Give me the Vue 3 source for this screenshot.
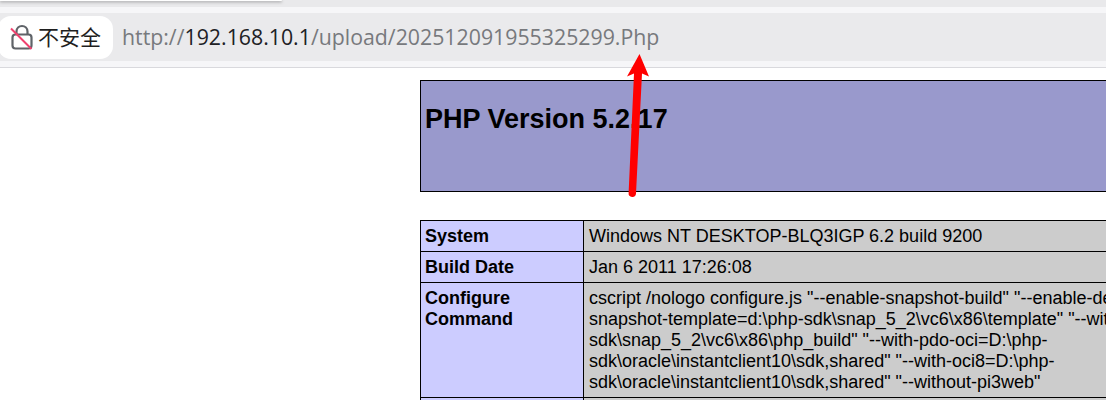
<script setup>
const rows = [
  { label: ['System'], value: ['Windows NT DESKTOP-BLQ3IGP 6.2 build 9200'] },
  { label: ['Build Date'], value: ['Jan 6 2011 17:26:08'] },
  {
    label: ['Configure', 'Command'],
    value: [
      'cscript /nologo configure.js "--enable-snapshot-build" "--enable-debug-pack" "--with-',
      'snapshot-template=d:\\php-sdk\\snap_5_2\\vc6\\x86\\template" "--with-php-build=d:\\php-',
      'sdk\\snap_5_2\\vc6\\x86\\php_build" "--with-pdo-oci=D:\\php-',
      'sdk\\oracle\\instantclient10\\sdk,shared" "--with-oci8=D:\\php-',
      'sdk\\oracle\\instantclient10\\sdk,shared" "--without-pi3web"',
    ],
  },
  { label: [''], value: [''] },
]
</script>

<template>
  <div class="screen">
    <header class="browser">
      <div class="top-strip"><div class="popup"></div></div>
      <div class="omnibox">
        <div class="chip">
          <svg class="lock" width="24" height="28" viewBox="0 0 24 28" fill="none">
            <path d="M6.5 11.5V8.6C6.5 5.2 9 3 12 3s5.5 2.2 5.5 5.6V11.5" stroke="#5f6368" stroke-width="2.2"/>
            <rect x="2.5" y="11.5" width="19" height="14" rx="3" stroke="#5f6368" stroke-width="2.2"/>
            <path d="M1 5.5 21.5 26" stroke="#f0416f" stroke-width="2"/>
          </svg>
          <span class="chip-text">不安全</span>
        </div>
        <div class="url"><span class="dim">http://</span><span class="host">192.168.10.1</span><span class="dim">/upload/202512091955325299.Php</span></div>
      </div>
    </header>
    <main class="page">
      <div class="banner"><h1>PHP Version 5.2.17</h1></div>
      <table class="info">
        <tbody>
          <tr v-for="(row, i) in rows" :key="i">
            <td class="label"><div v-for="l in row.label" :key="l">{{ l }}</div></td>
            <td class="value"><div v-for="v in row.value" :key="v">{{ v }}</div></td>
          </tr>
        </tbody>
      </table>
    </main>
    <svg class="arrow" width="40" height="150" viewBox="620 50 40 150">
      <path d="M639.5 54 649 76.5 642 73.5 636 193.5 A3.5 3.5 0 0 1 628.6 193 L634 73.5 627 76.5Z" fill="#ff0000"/>
    </svg>
  </div>
</template>

<style>
html, body { margin: 0; overflow: hidden; background: #fff; }
</style>

<style scoped>
.screen {
  position: relative;
  width: 1106px;
  height: 400px;
  overflow: hidden;
  background: #fff;
}
.browser {
  background: #f6f6f8;
  border-bottom: 1px solid #d9d9dd;
}
.top-strip {
  height: 7px;
  background: #e9e9eb;
  overflow: hidden;
}
.popup {
  width: 282px;
  height: 1px;
  background: #fff;
  border-bottom-right-radius: 2px;
  box-shadow: 0 1px 3px rgba(0, 0, 0, 0.55);
}
.omnibox {
  margin-top: 6px;
  margin-bottom: 6px;
  height: 48px;
  background: #eaeaec;
  display: flex;
  align-items: center;
  font-family: "Open Sans", "Noto Sans CJK SC", sans-serif;
}
.chip {
  width: 115px;
  height: 43px;
  margin: 1px 0 0 -2px;
  box-sizing: border-box;
  padding: 0 0 1px 12px;
  background: #fff;
  border-radius: 13px;
  display: flex;
  align-items: center;
  gap: 4px;
}
.chip-text {
  font-family: "Noto Sans CJK SC", sans-serif;
  font-size: 21px;
  line-height: 26px;
  padding-bottom: 3px;
  color: #1f1f1f;
}
.url {
  margin-left: 9px;
  padding-bottom: 2px;
  font-size: 21.3px;
  white-space: nowrap;
  color: #77797d;
}
.host { color: #202124; }
.page {
  padding: 12px 0 0 420px;
  font-family: "Liberation Sans", Arial, sans-serif;
  color: #000;
}
.banner {
  width: 900px;
  height: 110px;
  background: #9999cc;
  border: 1px solid #000;
  padding: 0 4px;
}
.banner h1 {
  margin: 22px 0 0;
  font-size: 27px;
  line-height: 32px;
  font-weight: 700;
}
.info {
  margin-top: 28px;
  width: 900px;
  border-collapse: collapse;
  table-layout: fixed;
  font-size: 18px;
  line-height: 21px;
}
.info td {
  border: 1px solid #000;
  padding: 5px 5px 4px;
  vertical-align: top;
  white-space: nowrap;
}
.label {
  width: 153px;
  background: #ccccff;
  font-weight: 700;
  padding-left: 4px !important;
}
.value { background: #cccccc; }
.arrow {
  position: absolute;
  left: 620px;
  top: 50px;
}
</style>
